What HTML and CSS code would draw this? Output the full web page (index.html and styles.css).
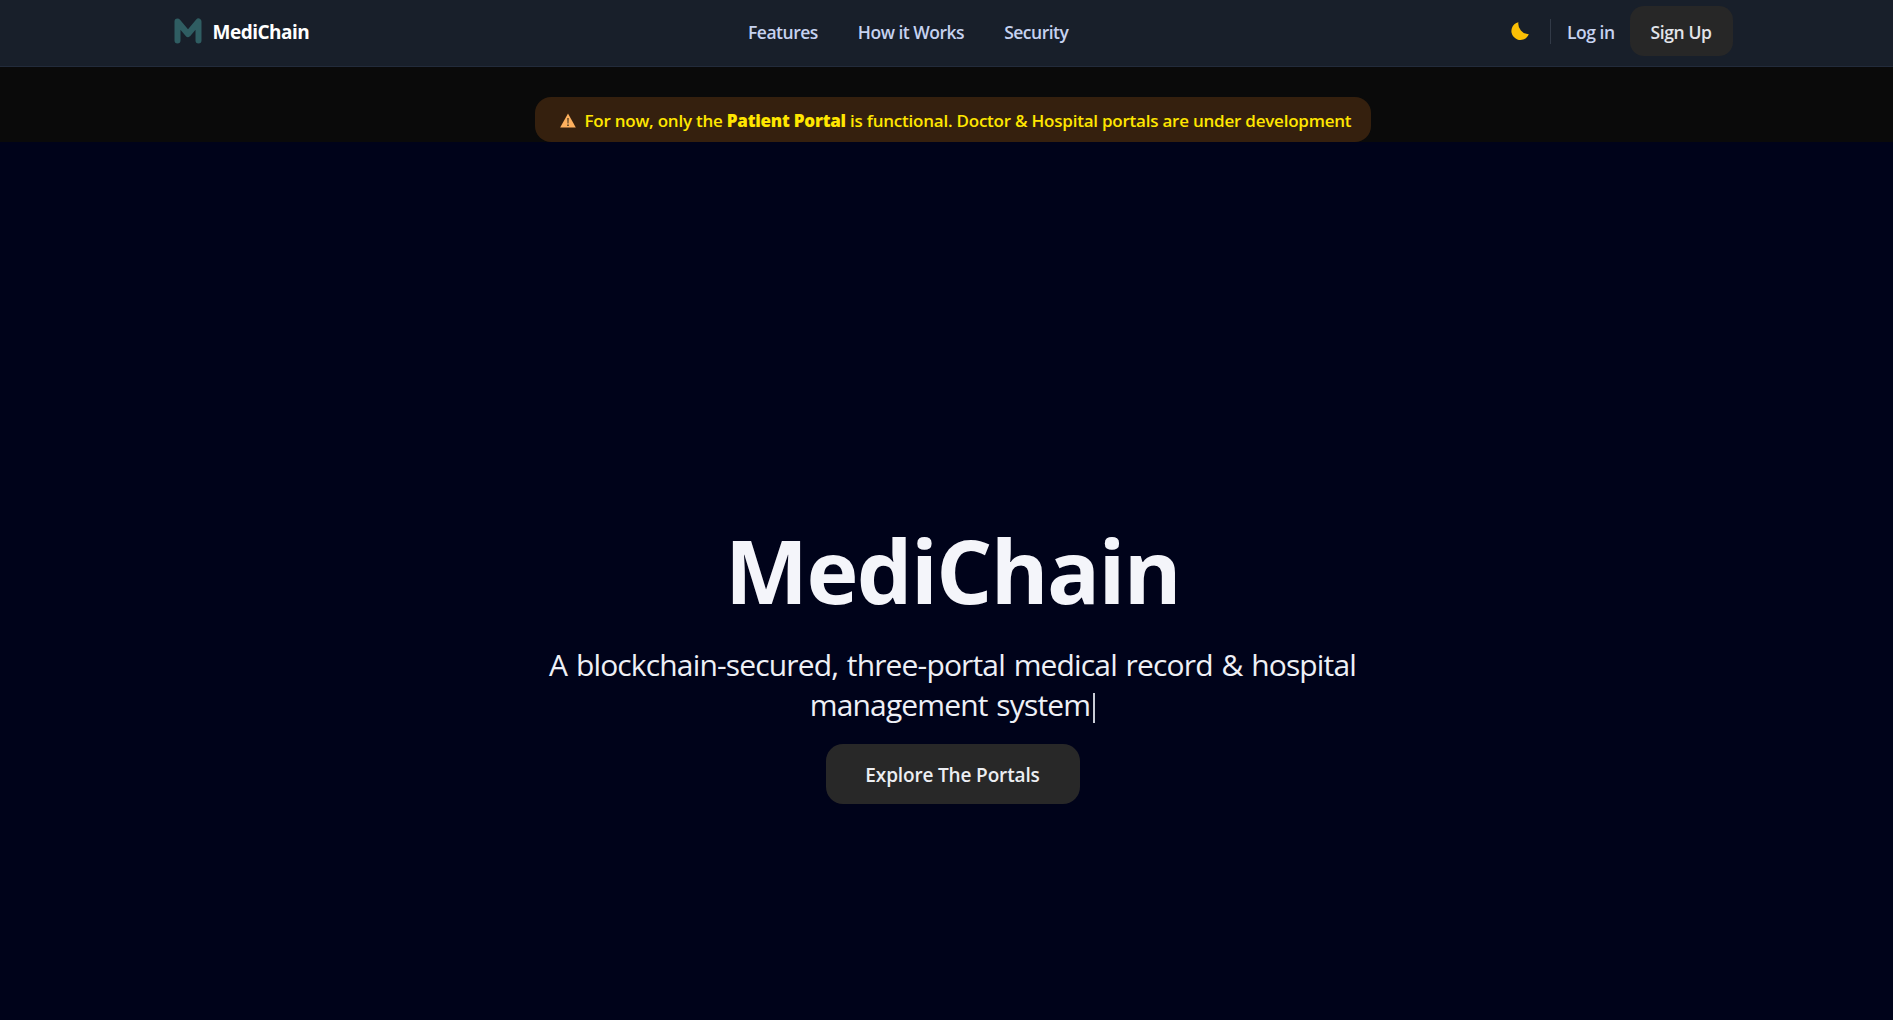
FILE: index.html
```html
<!DOCTYPE html>
<html lang="en">
<head>
    <meta charset="UTF-8">
    <title>MediChain</title>
    <link rel="stylesheet" href="styles.css">
</head>
<body>
    <nav class="navbar">
        <div class="nav-inner">
            <a class="brand" href="#">
                <svg class="brand-logo" viewBox="0 0 28 26" width="28" height="26">
                    <path d="M3.5 22.5V3.5L14 16L24.5 3.5V22.5" fill="none" stroke="#2f5d62" stroke-width="6" stroke-linecap="round" stroke-linejoin="round"/>
                </svg>
                <span class="brand-name">MediChain</span>
            </a>
            <div class="nav-links">
                <a href="#">Features</a>
                <a href="#">How it Works</a>
                <a href="#">Security</a>
            </div>
            <div class="nav-actions">
                <svg class="moon" viewBox="0 0 18 18" width="18" height="18">
                    <path d="M7.4 0.2A9 9 0 1 0 17.8 12.2A10.5 10.5 0 0 1 7.4 0.2Z" fill="#fbbf05"/>
                </svg>
                <span class="divider"></span>
                <a class="login" href="#">Log in</a>
                <a class="signup" href="#">Sign Up</a>
            </div>
        </div>
    </nav>

    <div class="notice-strip">
        <div class="notice">
            <svg class="warn" viewBox="0 0 16 15" width="16" height="15">
                <path d="M8 .4L15.8 14.6H.2Z" fill="#fdb05e"/>
                <path d="M7.3 5h1.4l-.2 5.4h-1Z M7.2 11.4h1.6V13H7.2Z" fill="#4a3a20"/>
            </svg>
            <span>For now, only the <strong>Patient Portal</strong> is functional. Doctor &amp; Hospital portals are under development</span>
        </div>
    </div>

    <main class="hero">
        <h1>MediChain</h1>
        <p class="tagline">A blockchain-secured, three-portal medical record &amp; hospital<br>management system<span class="caret"></span></p>
        <a class="cta" href="#">Explore The Portals</a>
    </main>
</body>
</html>
```

FILE: styles.css
```css
* {
    box-sizing: border-box;
}

html {
    overflow: hidden;
}

/* page runs a little wider than the window, so everything centres right of middle */
body {
    margin: 0;
    width: 1905px;
    height: 1020px;
    display: flex;
    flex-direction: column;
    background-color: #00031a;
    font-family: 'Open Sans', 'Noto Sans', sans-serif;
}

a {
    text-decoration: none;
}

.navbar {
    height: 67px;
    background-color: #181f2a;
    border-bottom: 1px solid #222b3b;
}

.nav-inner {
    width: 1560px;
    height: 100%;
    margin: 0 auto;
    padding: 0 0 4px 1px;
    display: flex;
    justify-content: space-between;
    align-items: center;
}

.brand {
    display: flex;
    align-items: center;
    gap: 11px;
    color: #fff;
    font-size: 19px;
    font-weight: 700;
    letter-spacing: -0.5px;
}

.brand-name {
    padding-top: 2px;
}

.nav-links {
    display: flex;
    gap: 40px;
    padding: 1px 4px 0 0;
}

.nav-links a,
.login {
    color: #c6d2f0;
    font-size: 17.5px;
    font-weight: 600;
    letter-spacing: -0.5px;
}

.login {
    padding-top: 2px;
}

.nav-actions {
    display: flex;
    align-items: center;
}

.moon {
    margin-right: 21px;
}

.divider {
    width: 1px;
    height: 25px;
    background-color: #323a47;
    margin-right: 16px;
}

.signup {
    margin-left: 15px;
    width: 103px;
    height: 50px;
    padding-top: 2px;
    display: flex;
    align-items: center;
    justify-content: center;
    border-radius: 14px;
    background-color: #272727;
    color: #e2e4ea;
    font-size: 17.5px;
    font-weight: 600;
    letter-spacing: -0.4px;
}

.notice-strip {
    height: 75px;
    background-color: #0a0a0a;
    display: flex;
    justify-content: center;
    align-items: flex-end;
}

.notice {
    width: 836px;
    height: 45px;
    padding: 2px 0 0 25px;
    display: flex;
    align-items: center;
    gap: 9px;
    border-radius: 16px;
    background-color: #35200e;
    color: #ffe600;
    font-size: 17px;
    font-weight: 600;
    letter-spacing: -0.23px;
    white-space: nowrap;
}

.notice strong {
    font-weight: 800;
}

.hero {
    flex: 1;
    display: flex;
    flex-direction: column;
    align-items: center;
    padding-top: 380px;
    text-align: center;
}

.hero h1 {
    margin: 0;
    color: #f4f5fa;
    font-size: 88px;
    font-weight: 700;
    line-height: 96px;
    letter-spacing: -1.6px;
}

.tagline {
    margin: 27px 0 0;
    color: #eef0f6;
    font-size: 30px;
    line-height: 40px;
    letter-spacing: -0.85px;
    word-spacing: 1.8px;
}

.caret {
    display: inline-block;
    width: 2px;
    height: 30px;
    margin-left: 3px;
    vertical-align: -7px;
    background-color: #c9ccd6;
}

.cta {
    margin-top: 19px;
    width: 254px;
    height: 60px;
    padding-top: 1px;
    display: flex;
    align-items: center;
    justify-content: center;
    border-radius: 17px;
    background-color: #282828;
    color: #eceef2;
    font-size: 19px;
    font-weight: 600;
    letter-spacing: -0.15px;
}
```
